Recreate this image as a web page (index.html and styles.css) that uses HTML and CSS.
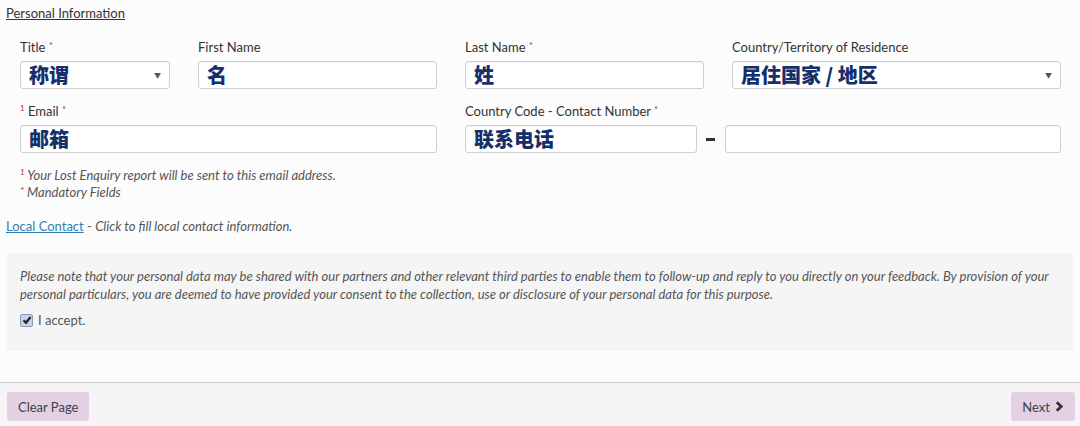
FILE: index.html
```html
<!DOCTYPE html>
<html>
<head>
<meta charset="utf-8">
<link rel="stylesheet" href="styles.css">
</head>
<body>
<div class="page">
  <div class="section-title">Personal Information</div>
  <div class="form-grid">
    <div class="field">
      <div class="label">Title <span class="req">*</span></div>
      <div class="control select"><span class="val">称谓</span><span class="caret">▼</span></div>
    </div>
    <div class="field">
      <div class="label">First Name</div>
      <div class="control"><span class="val">名</span></div>
    </div>
    <div class="field">
      <div class="label">Last Name <span class="req">*</span></div>
      <div class="control"><span class="val">姓</span></div>
    </div>
    <div class="field">
      <div class="label">Country/Territory of Residence</div>
      <div class="control select"><span class="val">居住国家 / 地区</span><span class="caret">▼</span></div>
    </div>
    <div class="field span2 row2">
      <div class="label"><span class="sup">1</span> Email <span class="req">*</span></div>
      <div class="control"><span class="val">邮箱</span></div>
    </div>
    <div class="field span2 row2">
      <div class="label">Country Code - Contact Number <span class="req">*</span></div>
      <div class="phone">
        <div class="control code"><span class="val">联系电话</span></div>
        <div class="dash"></div>
        <div class="control number"></div>
      </div>
    </div>
  </div>
  <div class="notes">
    <div><span class="sup">1</span> Your Lost Enquiry report will be sent to this email address.</div>
    <div><span class="req">*</span> Mandatory Fields</div>
  </div>
  <div class="local"><a class="link" href="#">Local Contact</a> - <em>Click to fill local contact information.</em></div>
  <div class="consent">
    <p>Please note that your personal data may be shared with our partners and other relevant third parties to enable them to follow-up and reply to you directly on your feedback. By provision of your personal particulars, you are deemed to have provided your consent to the collection, use or disclosure of your personal data for this purpose.</p>
    <div class="accept">
      <span class="check"><svg width="10" height="10" viewBox="0 0 10 10"><path d="M1.5 5.2 L4 7.8 L8.6 2" fill="none" stroke="#222" stroke-width="2.2"/></svg></span>
      <span>I accept.</span>
    </div>
  </div>
</div>
<div class="footer">
  <button class="btn">Clear Page</button>
  <button class="btn">Next <svg class="chev" width="9" height="11" viewBox="0 0 9 11"><path d="M1.8 1.2 L6.2 5.5 L1.8 9.8" fill="none" stroke="#333" stroke-width="2.8"/></svg></button>
</div>
</body>
</html>
```
FILE: styles.css
```css
* { box-sizing: border-box; }
html, body { margin: 0; padding: 0; }
body {
  font-family: Lato, "Noto Sans CJK SC", sans-serif;
  background: #fdfcfd;
  color: #333;
  width: 1080px;
  height: 426px;
  overflow: hidden;
}
.page { padding: 5px 6px 0 6px; }
.section-title {
  font-size: 13px;
  line-height: 16px;
  text-decoration: underline;
  color: #333;
}
.form-grid {
  display: grid;
  grid-template-columns: 150px 239px 239px 329px;
  column-gap: 28px;
  padding-left: 14px;
  margin-top: 18px;
}
.field .label {
  font-size: 13px;
  line-height: 16px;
  height: 16px;
  color: #333;
  margin-bottom: 6px;
}
.req { color: #c22a2a; font-size: 10px; line-height: 0; vertical-align: 3px; }
.sup { color: #c22a2a; font-size: 8px; line-height: 0; vertical-align: 5px; }
.row2 { margin-top: 14px; }
.span2 { grid-column: span 2; }
.control {
  height: 28px;
  border: 1px solid #cfcfcf;
  border-radius: 3px;
  background: #fff;
  box-shadow: inset 0 1px 1px rgba(0,0,0,0.05);
  display: flex;
  align-items: center;
  padding: 0 8px;
}
.val {
  font-family: "Noto Sans CJK SC", sans-serif;
  font-weight: 900;
  font-size: 20px;
  color: #152f6b;
  line-height: 26px;
  flex: 1;
}
.caret { font-size: 7px; color: #555; }
.phone { display: flex; align-items: center; }
.code { width: 232px; }
.dash { width: 9px; height: 3px; background: #333; margin: 0 10px 0 9px; }
.number { flex: 1; }
.notes {
  margin-top: 14px;
  padding-left: 14px;
  font-size: 13px;
  line-height: 17px;
  font-style: italic;
  color: #555;
}
.local {
  margin-top: 17px;
  font-size: 13px;
  line-height: 17px;
  color: #555;
}
.local em { font-style: italic; }
.link { color: #2f7fb0; text-decoration: underline; }
.consent {
  margin-top: 18px;
  background: #f6f5f6;
  border-radius: 4px;
  height: 98px;
  padding: 14px 14px 0 14px;
}
.consent p {
  margin: 0;
  font-size: 13px;
  line-height: 18px;
  font-style: italic;
  color: #555;
}
.accept {
  margin-top: 8px;
  display: flex;
  align-items: center;
  font-size: 13px;
  line-height: 18px;
  color: #555;
}
.check {
  width: 13px;
  height: 13px;
  border: 1px solid #8a9cc0;
  border-radius: 2px;
  background: #c9d3ea;
  display: inline-flex;
  align-items: center;
  justify-content: center;
  margin-right: 5px;
}
.footer {
  margin-top: 31px;
  border-top: 1px solid #c8c6c8;
  background: #f6f4f6;
  height: 44px;
  padding: 9px 5px 0 7px;
  display: flex;
  justify-content: space-between;
  align-items: flex-start;
}
.btn {
  font-family: Lato, sans-serif;
  font-size: 13px;
  color: #3f3f4a;
  background: #e3d0e3;
  border: none;
  border-radius: 3px;
  height: 29px;
  padding: 0 11px;
  display: inline-flex;
  align-items: center;
  gap: 5px;
}
```
